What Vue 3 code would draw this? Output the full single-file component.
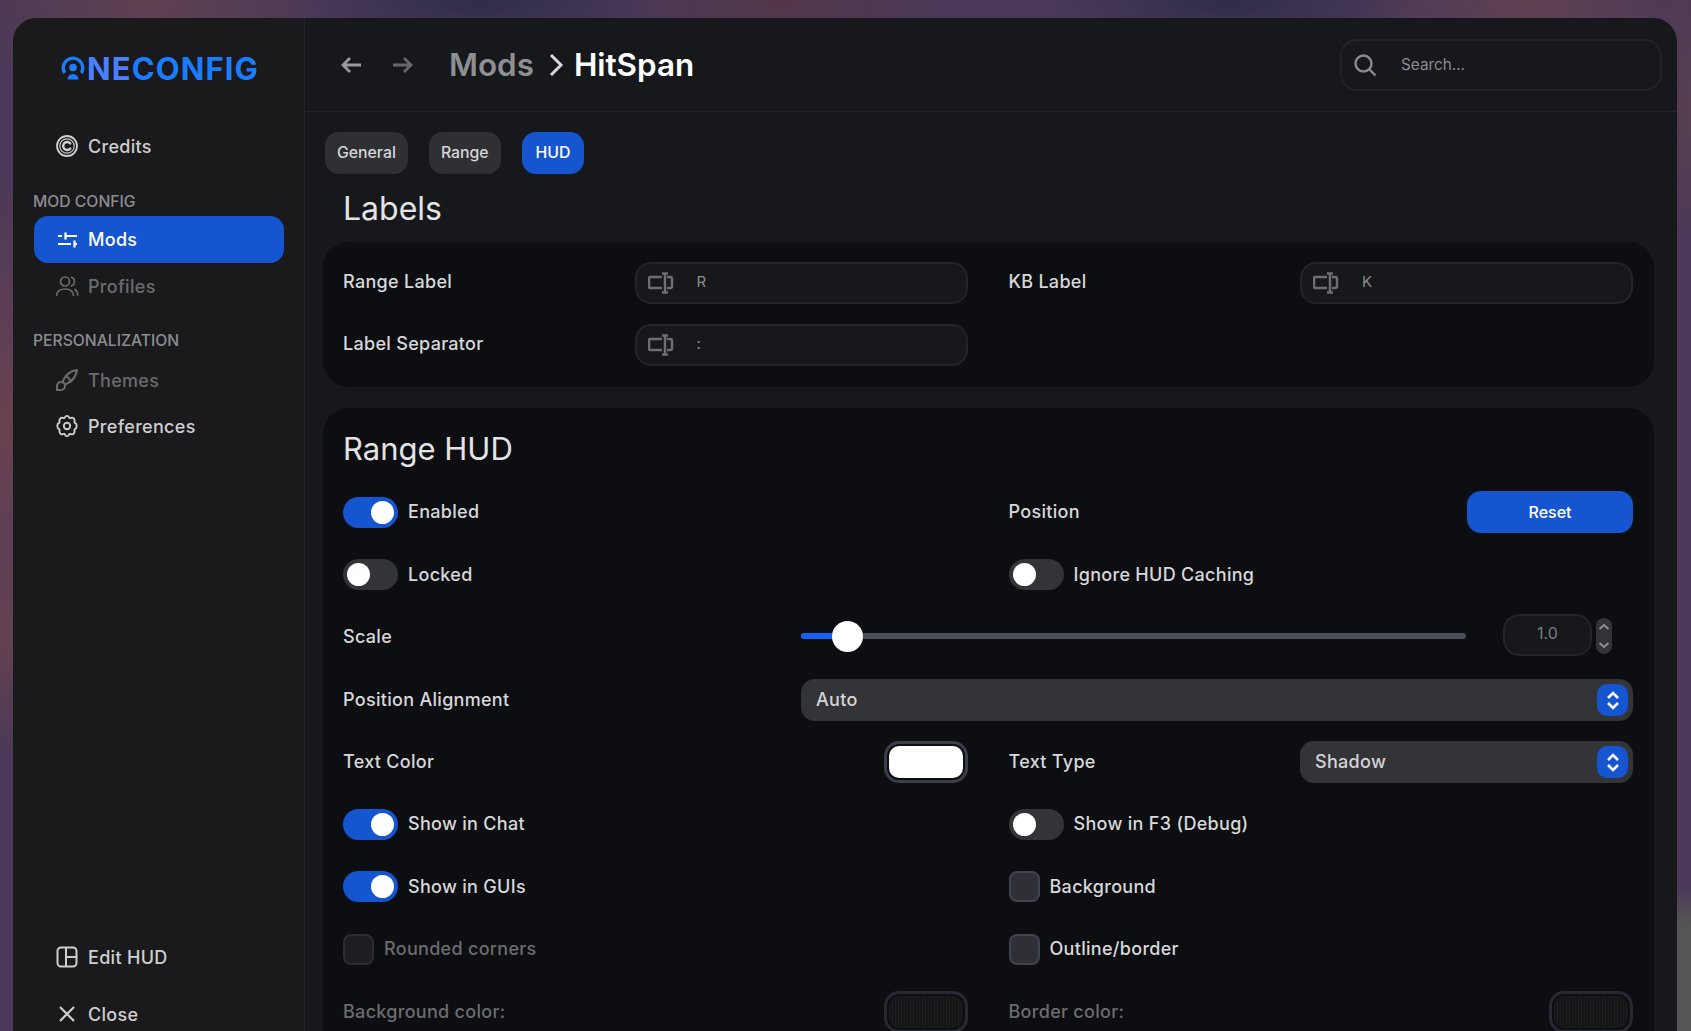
<script setup>
const chevrons = 'M7 10l5-5 5 5M7 15l5 5 5-5'
</script>

<template>
  <div class="desktop">
    <div class="window">
      <!-- Sidebar -->
      <aside class="sidebar">
        <div class="logo">
          <svg class="logo-o" viewBox="0 0 24 24" width="24" height="24">
            <path d="M3.6 17A9.8 9.8 0 1 1 20.4 17" fill="none" stroke="#1a7dff" stroke-width="3.4" />
            <circle cx="12" cy="11.5" r="3.8" fill="#1a7dff" />
            <path d="M6.5 23.5a5.5 5.5 0 0 1 11 0z" fill="#1a7dff" />
          </svg>
          <span class="logo-text"><span class="logo-light">NE</span>CONFIG</span>
        </div>

        <div class="nav-item credits">
          <svg viewBox="0 0 24 24" width="24" height="24" fill="none" stroke="currentColor" stroke-width="1.8">
            <circle cx="12" cy="12" r="10" />
            <circle cx="12" cy="12" r="7.2" stroke-width="1.2" />
            <path d="M15.200 9.400a4 4 0 1 0 0 5.200" stroke-width="2.400" stroke-linecap="round" />
          </svg>
          <span>Credits</span>
        </div>

        <div class="section-title first">MOD CONFIG</div>
        <div class="nav-item active">
          <svg viewBox="0 0 24 24" width="24" height="24" fill="none" stroke="currentColor" stroke-width="2.200">
            <path d="M3 8h4M10.500 8H22M10.500 4.500v7M3 16h13M19.500 16H22M19.500 12.500v7" />
          </svg>
          <span>Mods</span>
        </div>
        <div class="nav-item dim">
          <svg viewBox="0 0 24 24" width="24" height="24" fill="none" stroke="currentColor" stroke-width="1.700" stroke-linecap="round">
            <circle cx="10" cy="7.500" r="4.500" />
            <path d="M1.500 21.500c.5-4.500 4-6.500 8.500-6.500s8 2 8.500 6.500M16.500 3.200a4.600 4.600 0 0 1 0 8.600M20 15.500c1.600.9 2.500 3 2.800 5.500" />
          </svg>
          <span>Profiles</span>
        </div>

        <div class="section-title">PERSONALIZATION</div>
        <div class="nav-item dim">
          <svg viewBox="0 0 24 24" width="24" height="24" fill="none" stroke="currentColor" stroke-width="2.100" stroke-linecap="round" stroke-linejoin="round">
            <path d="M2 22v-4a4 4 0 1 1 4 4H2" />
            <path d="M22 2A18 18 0 0 0 7.800 13.400M22 2a18 18 0 0 1-11.400 14.200M10.600 8a10 10 0 0 1 5.400 5.400" />
          </svg>
          <span>Themes</span>
        </div>
        <div class="nav-item">
          <svg viewBox="0 0 24 24" width="24" height="24" fill="none" stroke="currentColor" stroke-width="1.900" stroke-linejoin="round">
            <path d="M10.325 2.817c.426-1.256 2.924-1.256 3.35 0a1.724 1.724 0 0 0 2.573 1.066c1.543-.94 3.310.826 3.370 2.870a1.724 1.724 0 0 0 1.065 2.572c1.256.926 1.256 4.424 0 5.350a1.724 1.724 0 0 0-1.066 2.573c-.06 2.043-1.826 3.810-3.370 2.870a1.724 1.724 0 0 0-2.572 1.065c-.426 1.256-2.924 1.256-3.350 0a1.724 1.724 0 0 0-2.573-1.066c-1.543.94-3.310-.826-3.370-2.870a1.724 1.724 0 0 0-1.065-2.572c-1.256-.926-1.256-4.424 0-5.350a1.724 1.724 0 0 0 1.066-2.573c.06-2.043 1.826-3.810 3.370-2.870 1 .608 2.296.07 2.572-1.065z" />
            <circle cx="12" cy="12" r="3.200" />
          </svg>
          <span>Preferences</span>
        </div>

        <div class="nav-item edit-hud">
          <svg viewBox="0 0 24 24" width="24" height="24" fill="none" stroke="currentColor" stroke-width="2">
            <rect x="2.500" y="2.500" width="19" height="19" rx="3.500" />
            <path d="M11 2.500v19M11 12h10.500" />
          </svg>
          <span>Edit HUD</span>
        </div>
        <div class="nav-item close">
          <svg viewBox="0 0 24 24" width="24" height="24" fill="none" stroke="currentColor" stroke-width="2.200">
            <path d="M5 5l14 14M19 5L5 19" />
          </svg>
          <span>Close</span>
        </div>
      </aside>

      <!-- Main -->
      <main class="main">
        <header class="topbar">
          <svg class="arrow back" viewBox="0 0 24 24" width="24" height="24" fill="none" stroke="currentColor" stroke-width="2.800">
            <path d="M22 12H4M11 5l-7 7 7 7" />
          </svg>
          <svg class="arrow forward" viewBox="0 0 24 24" width="24" height="24" fill="none" stroke="currentColor" stroke-width="2.800">
            <path d="M2 12h18M13 5l7 7-7 7" />
          </svg>
          <div class="crumbs">
            <span class="crumb-parent">Mods</span>
            <svg class="crumb-sep" viewBox="0 0 16 24" width="16" height="24" fill="none" stroke="currentColor" stroke-width="3">
              <path d="M3 2l10 10L3 22" />
            </svg>
            <span class="crumb-current">HitSpan</span>
          </div>
          <div class="search">
            <svg viewBox="0 0 24 24" width="24" height="24" fill="none" stroke="currentColor" stroke-width="2.400">
              <circle cx="10.500" cy="10.500" r="8" />
              <path d="M16.500 16.500l6 6" />
            </svg>
            <span>Search...</span>
          </div>
        </header>

        <div class="content">
          <div class="tabs">
            <div class="tab">General</div>
            <div class="tab">Range</div>
            <div class="tab on">HUD</div>
          </div>

          <h2 class="page-title">Labels</h2>
          <section class="card labels">
            <div class="rows">
              <div class="row">
                <div class="cell">
                  <span>Range Label</span>
                  <div class="field">
                    <svg viewBox="0 0 26 22" width="26" height="22" fill="none" stroke="currentColor" stroke-width="2.500">
                      <path d="M14 5H2.500a1.500 1.500 0 0 0-1.500 1.500v8a1.500 1.500 0 0 0 1.500 1.500H14M19 5h3a2 2 0 0 1 2 2v7a2 2 0 0 1-2 2h-3M17 2v18M14 1.500h6M14 20.500h6" />
                    </svg>
                    <span>R</span>
                  </div>
                </div>
                <div class="cell">
                  <span>KB Label</span>
                  <div class="field">
                    <svg viewBox="0 0 26 22" width="26" height="22" fill="none" stroke="currentColor" stroke-width="2.500">
                      <path d="M14 5H2.500a1.500 1.500 0 0 0-1.500 1.500v8a1.500 1.500 0 0 0 1.500 1.500H14M19 5h3a2 2 0 0 1 2 2v7a2 2 0 0 1-2 2h-3M17 2v18M14 1.500h6M14 20.500h6" />
                    </svg>
                    <span>K</span>
                  </div>
                </div>
              </div>
              <div class="row">
                <div class="cell">
                  <span>Label Separator</span>
                  <div class="field">
                    <svg viewBox="0 0 26 22" width="26" height="22" fill="none" stroke="currentColor" stroke-width="2.500">
                      <path d="M14 5H2.500a1.500 1.500 0 0 0-1.500 1.500v8a1.500 1.500 0 0 0 1.500 1.500H14M19 5h3a2 2 0 0 1 2 2v7a2 2 0 0 1-2 2h-3M17 2v18M14 1.500h6M14 20.500h6" />
                    </svg>
                    <span>:</span>
                  </div>
                </div>
              </div>
            </div>
          </section>

          <section class="card hud">
            <h2 class="card-title">Range HUD</h2>
            <div class="rows">
              <div class="row">
                <div class="cell start"><div class="toggle on"><i></i></div><span>Enabled</span></div>
                <div class="cell">
                  <span>Position</span>
                  <button class="reset">Reset</button>
                </div>
              </div>
              <div class="row">
                <div class="cell start"><div class="toggle"><i></i></div><span>Locked</span></div>
                <div class="cell start"><div class="toggle"><i></i></div><span>Ignore HUD Caching</span></div>
              </div>
              <div class="row wide">
                <div class="cell"><span>Scale</span></div>
                <div class="slider-wrap">
                  <div class="slider">
                    <div class="slider-fill"></div>
                    <div class="slider-knob"></div>
                  </div>
                  <div class="number">1.0</div>
                  <div class="stepper">
                    <svg viewBox="0 0 16 36" width="16" height="36" fill="none" stroke="currentColor" stroke-width="1.800">
                      <path d="M3.500 11l4.500-4 4.500 4M3.500 25l4.500 4 4.500-4" />
                    </svg>
                  </div>
                </div>
              </div>
              <div class="row wide">
                <div class="cell"><span>Position Alignment</span></div>
                <div class="select">
                  <span>Auto</span>
                  <div class="select-btn">
                    <svg viewBox="0 0 24 24" width="24" height="24" fill="none" stroke="currentColor" stroke-width="2.600">
                      <path :d="chevrons" />
                    </svg>
                  </div>
                </div>
              </div>
              <div class="row">
                <div class="cell">
                  <span>Text Color</span>
                  <div class="swatch"><div class="swatch-fill white"></div></div>
                </div>
                <div class="cell">
                  <span>Text Type</span>
                  <div class="select short">
                    <span>Shadow</span>
                    <div class="select-btn">
                      <svg viewBox="0 0 24 24" width="24" height="24" fill="none" stroke="currentColor" stroke-width="2.600">
                        <path :d="chevrons" />
                      </svg>
                    </div>
                  </div>
                </div>
              </div>
              <div class="row">
                <div class="cell start"><div class="toggle on"><i></i></div><span>Show in Chat</span></div>
                <div class="cell start"><div class="toggle"><i></i></div><span>Show in F3 (Debug)</span></div>
              </div>
              <div class="row">
                <div class="cell start"><div class="toggle on"><i></i></div><span>Show in GUIs</span></div>
                <div class="cell start"><div class="check"></div><span>Background</span></div>
              </div>
              <div class="row">
                <div class="cell start disabled"><div class="check"></div><span>Rounded corners</span></div>
                <div class="cell start"><div class="check"></div><span>Outline/border</span></div>
              </div>
              <div class="row">
                <div class="cell disabled">
                  <span>Background color:</span>
                  <div class="swatch"><div class="swatch-fill"></div></div>
                </div>
                <div class="cell disabled">
                  <span>Border color:</span>
                  <div class="swatch"><div class="swatch-fill"></div></div>
                </div>
              </div>
            </div>
          </section>
        </div>
      </main>
    </div>
  </div>
</template>

<style>
body { margin: 0; background: #47355a; }
</style>

<style scoped>
.desktop {
  height: 100vh;
  overflow: hidden;
  box-sizing: border-box;
  padding: 18px 14px 0 13px;
  font-family: Inter, "Liberation Sans", sans-serif;
  background:
    linear-gradient(to bottom, rgba(85, 85, 85, 0) 885px, #555555 925px) right / 40px 100% no-repeat,
    radial-gradient(ellipse 160px 260px at 0 430px, #694250 0%, rgba(105, 66, 80, 0) 100%),
    radial-gradient(ellipse 140px 120px at 0 640px, #62414f 0%, rgba(98, 65, 79, 0) 100%),
    radial-gradient(ellipse 180px 120px at 150px 0, #5f404f 0%, rgba(95, 64, 79, 0) 100%),
    radial-gradient(ellipse 160px 90px at 780px 0, #533748 0%, rgba(83, 55, 72, 0) 100%),
    radial-gradient(ellipse 170px 130px at 1530px 0, #604050 0%, rgba(96, 64, 80, 0) 100%),
    radial-gradient(ellipse 50px 130px at 100% 110px, #58404f 0%, rgba(88, 64, 79, 0) 100%),
    radial-gradient(ellipse 180px 60px at 480px 0, #2f2c4a 0%, rgba(47, 44, 74, 0) 100%),
    radial-gradient(ellipse 180px 60px at 1230px 0, #2f2c4a 0%, rgba(47, 44, 74, 0) 100%),
    #4a3958;
}

.window {
  display: flex;
  height: 1050px;
  border-radius: 24px;
  overflow: hidden;
  background: #16181b;
  color: #d8d8da;
}

/* sidebar */
.sidebar {
  width: 292px;
  flex-shrink: 0;
  box-sizing: border-box;
  background: #1a1a1d;
  border-right: 1px solid #232427;
  display: flex;
  flex-direction: column;
  padding: 32px 20px 31px 21px;
}

.logo {
  display: flex;
  align-items: center;
  height: 36px;
  margin-left: 27px;
  gap: 2px;
}
.logo-o { flex-shrink: 0; }
.logo-text {
  font-size: 31px;
  font-weight: 700;
  letter-spacing: 1.1px;
  color: #1a7dff;
}
.logo-light { color: #4a80ff; }

.nav-item {
  display: flex;
  align-items: center;
  height: 46px;
  padding-left: 21px;
  gap: 9px;
  border-radius: 14px;
  font-size: 18px;
  font-weight: 450;
  letter-spacing: 0.3px;
  color: #cfcfd1;
}
.nav-item svg { flex-shrink: 0; }
.nav-item.credits { margin-top: 37px; }
.nav-item.active {
  height: 47px;
  background: #1555cf;
  color: #ffffff;
}
.nav-item.dim { color: #6a6b6e; }
.nav-item.edit-hud { margin-top: auto; }
.nav-item.close { margin-top: 11px; }

.section-title {
  height: 20px;
  line-height: 20px;
  margin-top: 22px;
  margin-bottom: 6px;
  margin-left: -1px;
  font-size: 15.7px;
  font-weight: 500;
  color: #8d8d90;
}
.section-title.first {
  margin-top: 23px;
  margin-bottom: 4px;
}

/* main */
.main {
  flex: 1;
  min-width: 0;
  display: flex;
  flex-direction: column;
}

.topbar {
  height: 94px;
  flex-shrink: 0;
  box-sizing: border-box;
  border-bottom: 1px solid #232427;
  display: flex;
  align-items: center;
  padding: 0 15px 0 34px;
}
.arrow { flex-shrink: 0; }
.arrow.back { color: #9a9a9c; }
.arrow.forward { color: #666769; margin-left: 28px; }

.crumbs {
  display: flex;
  align-items: center;
  margin-left: 34px;
  font-size: 31.4px;
  font-weight: 600;
}
.crumb-parent { color: #8f8f91; }
.crumb-sep { color: #d5d5d6; margin: 0 10px 0 14px; }
.crumb-current { color: #ffffff; }

.search {
  margin-left: auto;
  width: 322px;
  height: 52px;
  box-sizing: border-box;
  border: 2px solid #222427;
  border-radius: 17px;
  display: flex;
  align-items: center;
  padding-left: 11px;
  gap: 24px;
  font-size: 15.3px;
  color: #8c8c8f;
}

.content {
  padding: 20px 23px 0 18px;
}

.tabs {
  display: flex;
  gap: 21px;
  padding-left: 2px;
}
.tab {
  height: 42px;
  padding: 0 12px;
  line-height: 42px;
  border-radius: 14px;
  background: #2f3034;
  font-size: 15.8px;
  font-weight: 500;
  color: #d6d6d8;
}
.tab.on {
  padding: 0 14px;
  background: #1555cf;
  color: #ffffff;
}

.page-title {
  margin: 16px 0 14px 20px;
  height: 38px;
  line-height: 38px;
  font-size: 32px;
  font-weight: 400;
  color: #e4e4e6;
}

.card {
  background: #0d0e11;
  border-radius: 26px;
  padding: 20px 21px 21px 20px;
}
.card.hud {
  margin-top: 21px;
  padding-top: 20px;
}
.card-title {
  margin: 0 0 21px;
  height: 42px;
  line-height: 42px;
  font-size: 31px;
  font-weight: 400;
  color: #e4e4e6;
}

.rows {
  display: flex;
  flex-direction: column;
  gap: 20.4px;
}
.row {
  display: grid;
  grid-template-columns: 1fr 1fr;
  column-gap: 41px;
  min-height: 42px;
}
.row.wide {
  grid-template-columns: 458px 1fr;
  column-gap: 0;
}
.cell {
  display: flex;
  align-items: center;
  justify-content: space-between;
  font-size: 18px;
  font-weight: 450;
  letter-spacing: 0.3px;
  color: #d8d8da;
}
.hud .cell > span { padding-bottom: 1px; }
.labels .cell > span { padding-bottom: 4px; }
.cell.start {
  justify-content: flex-start;
  gap: 10px;
}
.cell.disabled { color: #6c6c6f; }

.field {
  width: 333px;
  height: 42px;
  box-sizing: border-box;
  border: 2px solid #232529;
  border-radius: 16px;
  background: #16181b;
  display: flex;
  align-items: center;
  padding-left: 11px;
  gap: 23px;
  font-size: 15px;
  font-weight: 400;
  color: #8c8c8f;
}
.field span { padding-bottom: 3px; }
.field svg { color: #6d6e71; flex-shrink: 0; }

.toggle {
  width: 55px;
  height: 31px;
  box-sizing: border-box;
  padding: 4px;
  border-radius: 16px;
  background: #333438;
  display: flex;
  flex-shrink: 0;
}
.toggle.on {
  background: #1555cf;
  justify-content: flex-end;
}
.toggle i {
  display: block;
  width: 23px;
  height: 23px;
  border-radius: 50%;
  background: #ffffff;
}

.check {
  width: 31px;
  height: 31px;
  box-sizing: border-box;
  border: 2px solid #3f4450;
  border-radius: 8px;
  background: #2e3036;
  flex-shrink: 0;
}
.disabled .check {
  border-color: #2b2d35;
  background: #1d1e22;
}

.reset {
  width: 166px;
  height: 42px;
  border: none;
  border-radius: 14px;
  background: #1555cf;
  color: #ffffff;
  font-family: inherit;
  font-size: 16px;
  font-weight: 500;
}

.slider-wrap {
  display: flex;
  align-items: center;
  padding-right: 21px;
}
.slider {
  position: relative;
  flex: 1;
  height: 6px;
  margin-top: -2px;
  border-radius: 3px;
  background: #4a4e57;
}
.slider-fill {
  width: 40px;
  height: 100%;
  border-radius: 3px;
  background: #1560f5;
}
.slider-knob {
  position: absolute;
  left: 31px;
  top: -12px;
  width: 31px;
  height: 31px;
  border-radius: 50%;
  background: #ffffff;
}
.number {
  width: 89px;
  height: 42px;
  box-sizing: border-box;
  margin-left: 37px;
  border: 2px solid #232529;
  border-radius: 16px;
  background: #16181b;
  line-height: 35px;
  text-align: center;
  font-size: 16px;
  font-weight: 400;
  color: #7c7c7f;
  margin-top: -4px;
}
.stepper {
  width: 16px;
  height: 36px;
  margin-left: 4px;
  border-radius: 8px;
  background: #333438;
  color: #929294;
  margin-top: -3px;
}
.stepper svg { display: block; }

.select {
  height: 42px;
  box-sizing: border-box;
  border-radius: 14px;
  background: #333438;
  display: flex;
  align-items: center;
  justify-content: space-between;
  padding: 0 5px 0 15px;
  font-size: 18px;
  font-weight: 450;
  letter-spacing: 0.3px;
  color: #d4d4d6;
}
.select.short { width: 333px; }
.select-btn {
  width: 31px;
  height: 32px;
  border-radius: 10px;
  background: #1555cf;
  color: #ffffff;
  display: flex;
  align-items: center;
  justify-content: center;
}

.swatch {
  width: 84px;
  height: 42px;
  box-sizing: border-box;
  border: 3px solid #3a3e49;
  border-radius: 15px;
  padding: 2px;
  background: #0d0e11;
  flex-shrink: 0;
}
.disabled .swatch { border-color: #272a33; }
.swatch-fill {
  height: 100%;
  border-radius: 10px;
  background: repeating-linear-gradient(90deg, #1d1e20 0 1px, #141517 1px 3px);
}
.swatch-fill.white { background: #ffffff; }
</style>
